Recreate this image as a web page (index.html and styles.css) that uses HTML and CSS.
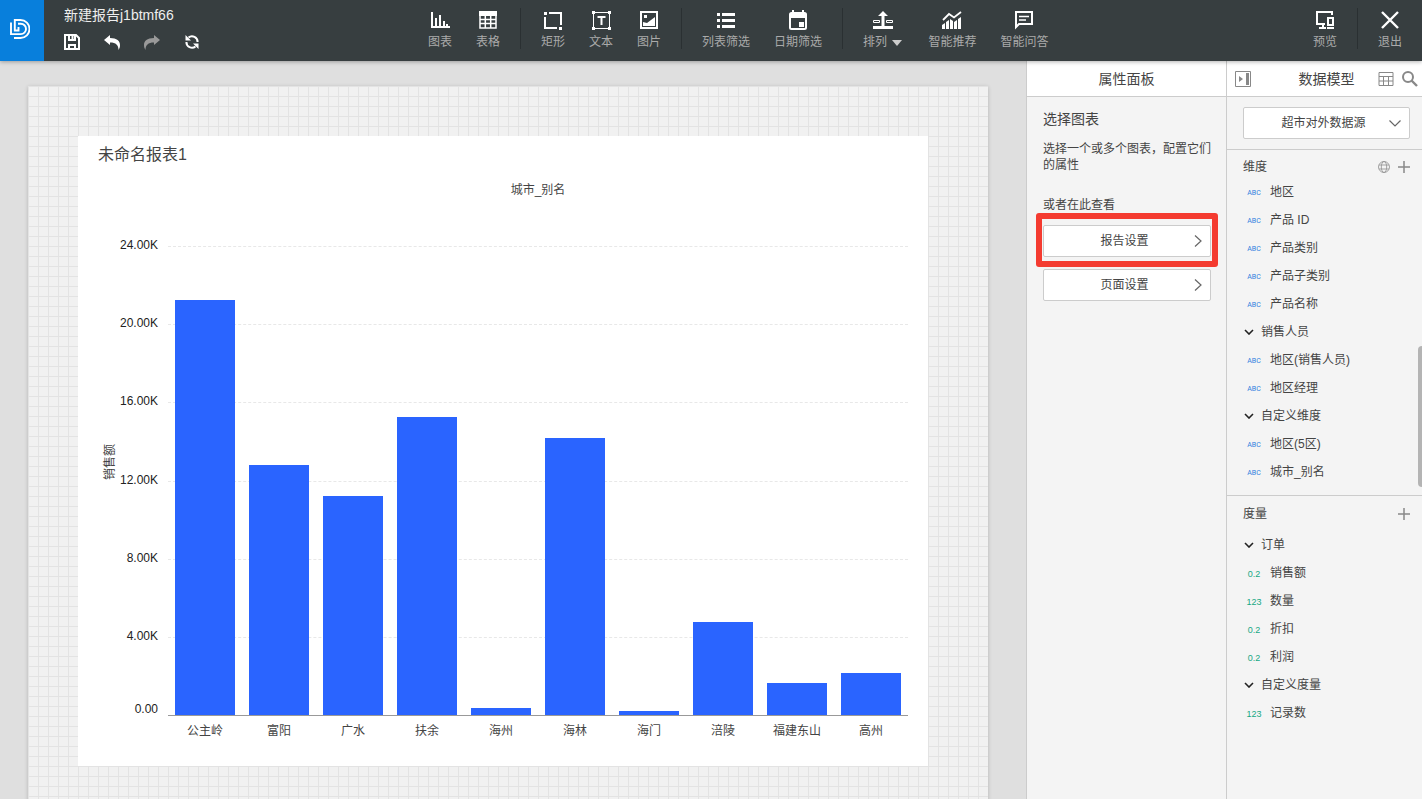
FILE: index.html
```html
<!DOCTYPE html>
<html lang="zh-CN">
<head>
    <meta charset="UTF-8">
    <meta name="viewport" content="width=device-width, initial-scale=1.0">
    <title>新建报告j1btmf66</title>
    <link rel="stylesheet" href="styles.css">
</head>
<body>

<header class="topbar">
    <a class="logo" href="#" aria-label="首页">
        <svg width="20" height="20" viewBox="0 0 20 20" fill="none" stroke="#fff" stroke-width="1.9">
            <path d="M1 3.500v11.600h9.800a5.200 5.200 0 0 0 0-10.400H8"/>
            <path d="M4.800 0v11.500h3.700V8"/>
            <path d="M4 1h6.500a9 9 0 0 1 0 18H4"/>
        </svg>
    </a>
    <div class="report">
        <h1>新建报告j1btmf66</h1>
        <div class="history">
            <button aria-label="保存">
                <svg width="16" height="16" viewBox="0 0 16 16" fill="none" stroke="#fff" stroke-width="2"><path d="M1 1h11l3 3v11H1z"/><path d="M5 1v5h6V1M5 15v-4h6v4M8.500 2v3"/></svg>
            </button>
            <button aria-label="撤销">
                <svg width="16" height="16" viewBox="0 0 16 16" fill="#fff"><path d="M0 6l6-5v3c7 0 10 3 10 7 0 2-.5 3.500-1.500 5C14.500 11 12 8.500 6 8.500V11z"/></svg>
            </button>
            <button aria-label="重做" disabled>
                <svg width="16" height="16" viewBox="0 0 16 16" fill="#999"><path d="M16 6l-6-5v3C3 4 0 7 0 11c0 2 .5 3.500 1.500 5C1.500 11 4 8.500 10 8.500V11z"/></svg>
            </button>
            <button aria-label="刷新">
                <svg width="16" height="16" viewBox="0 0 16 16" fill="none" stroke="#fff" stroke-width="2"><path d="M4.500 3.500A5.600 5.600 0 0 1 13.600 8M11.500 12.500A5.600 5.600 0 0 1 2.400 8"/><path d="M1.500 1v5.500H7zM14.500 15V9.500H9z" fill="#fff" stroke="none"/></svg>
            </button>
        </div>
    </div>

    <nav class="toolbar">
        <div class="tool-group">
            <button class="tool">
                <svg width="20" height="20" viewBox="0 0 20 20" fill="none" stroke="#fff" stroke-width="2"><path d="M2 2v15h18"/><path d="M6 16V8M10 16V5M14 16v-5M17 16v-2"/></svg>
                <span>图表</span>
            </button>
            <button class="tool">
                <svg width="20" height="20" viewBox="0 0 20 20" fill="none" stroke="#fff" stroke-width="1.500"><path d="M2 2h16v16H2zM2 9.500h16M2 13.500h16M7.300 6v12M12.700 6v12"/><path d="M1 1h18v5H1z" fill="#fff" stroke="none"/></svg>
                <span>表格</span>
            </button>
        </div>
        <div class="tool-group">
            <button class="tool">
                <svg width="20" height="20" viewBox="0 0 20 20" fill="none" stroke="#fff" stroke-width="2"><path d="M6 3h12v12M2 7v11h12"/><path d="M1 2h3v3H1zM16 17h3v3h-3z" fill="#fff" stroke="none"/></svg>
                <span>矩形</span>
            </button>
            <button class="tool">
                <svg width="20" height="20" viewBox="0 0 20 20" fill="none" stroke="#fff"><path d="M2.500 2.500h16v16h-16z"/><path d="M6.500 7h8M10.500 6v9" stroke-width="2"/><path d="M1 1h3v3H1zM17 1h3v3h-3zM1 17h3v3H1zM17 17h3v3h-3z" fill="#fff" stroke="none"/></svg>
                <span>文本</span>
            </button>
            <button class="tool">
                <svg width="20" height="20" viewBox="0 0 20 20" fill="none" stroke="#fff" stroke-width="2"><path d="M2 2h16v16H2z"/><path d="M4 12l4 1 8-6v9H4zM5 5h3v3H5z" fill="#fff" stroke="none"/></svg>
                <span>图片</span>
            </button>
        </div>
        <div class="tool-group">
            <button class="tool">
                <svg width="20" height="20" viewBox="0 0 20 20" fill="#fff"><path d="M1 3h3v3H1zM6 3h13v3H6zM1 9h3v3H1zM6 9h13v3H6zM1 15h3v3H1zM6 15h13v3H6z"/></svg>
                <span>列表筛选</span>
            </button>
            <button class="tool">
                <svg width="20" height="20" viewBox="0 0 20 20" fill="none" stroke="#fff" stroke-width="2"><rect x="2" y="3" width="16" height="16" rx="1.500"/><path d="M2 3h16v5H2zM11 12h5v5h-5z" fill="#fff" stroke="none"/><path d="M5 0v4M15 0v4"/></svg>
                <span>日期筛选</span>
            </button>
        </div>
        <div class="tool-group">
            <button class="tool tool-menu">
                <svg width="20" height="20" viewBox="0 0 20 20" fill="#fff"><path d="M10 1l5 5h-3.500v10h-3V6H5zM0 16h20v3H0z"/><path d="M.5 10.500h6v2h-6zM13.500 10.500h6v2h-6z" fill="none" stroke="#fff"/></svg>
                <span>排列 <i class="caret"></i></span>
            </button>
            <button class="tool">
                <svg width="20" height="20" viewBox="0 0 20 20" fill="#fff"><path d="M1 10l6-6 5 3.500L19 2" fill="none" stroke="#fff" stroke-width="1.800"/><path d="M0 19v-4l3-2v6zM4 19v-7l3-2v9zM8 19V9l3 2v8zM12 19v-7l3-2v9zM16 19V9l3-2v12z"/></svg>
                <span>智能推荐</span>
            </button>
            <button class="tool">
                <svg width="20" height="20" viewBox="0 0 20 20" fill="none" stroke="#fff" stroke-width="2"><path d="M2 17V2h16v12H5z"/><path d="M5 6.500h10M5 10h7" stroke-width="1.600"/></svg>
                <span>智能问答</span>
            </button>
        </div>
    </nav>

    <nav class="toolbar toolbar-end">
        <div class="tool-group">
            <button class="tool">
                <svg width="20" height="20" viewBox="0 0 20 20" fill="none" stroke="#fff" stroke-width="2"><path d="M17 5V2H2v12h8M8 14v4M4 18h7"/><path d="M13 8h5v7h-5zM12 18h7"/></svg>
                <span>预览</span>
            </button>
        </div>
        <div class="tool-group">
            <button class="tool">
                <svg width="20" height="20" viewBox="0 0 20 20" stroke="#fff" stroke-width="2.400"><path d="M2 2l16 16M18 2L2 18"/></svg>
                <span>退出</span>
            </button>
        </div>
    </nav>
</header>

<div class="workspace">
    <main class="canvas">
        <div class="page">
            <section class="card">
                <h2>未命名报表1</h2>
                <div class="chart-title">城市_别名</div>
                <div class="chart">
                    <div class="y-title"><span>销售额</span></div>
                    <ul class="y-axis">
                        <li>24.00K</li>
                        <li>20.00K</li>
                        <li>16.00K</li>
                        <li>12.00K</li>
                        <li>8.00K</li>
                        <li>4.00K</li>
                        <li>0.00</li>
                    </ul>
                    <div class="plot">
                        <div class="grid-lines"><i></i><i></i><i></i><i></i><i></i><i></i></div>
                        <div class="bars">
                            <div class="bar" style="height: 88.5%"></div>
                            <div class="bar" style="height: 53.3%"></div>
                            <div class="bar" style="height: 46.7%"></div>
                            <div class="bar" style="height: 63.5%"></div>
                            <div class="bar" style="height: 1.5%"></div>
                            <div class="bar" style="height: 59.1%"></div>
                            <div class="bar" style="height: 0.9%"></div>
                            <div class="bar" style="height: 19.8%"></div>
                            <div class="bar" style="height: 6.8%"></div>
                            <div class="bar" style="height: 9%"></div>
                        </div>
                    </div>
                </div>
                <ul class="x-axis">
                    <li>公主岭</li>
                    <li>富阳</li>
                    <li>广水</li>
                    <li>扶余</li>
                    <li>海州</li>
                    <li>海林</li>
                    <li>海门</li>
                    <li>涪陵</li>
                    <li>福建东山</li>
                    <li>高州</li>
                </ul>
            </section>
        </div>
    </main>

    <aside class="panel props">
        <div class="panel-head"><h2>属性面板</h2></div>
        <div class="props-body">
            <h3>选择图表</h3>
            <p>选择一个或多个图表，配置它们的属性</p>
            <p class="hint">或者在此查看</p>
            <button class="link-btn highlight">
                <span>报告设置</span>
                <svg width="8" height="12" viewBox="0 0 8 12" fill="none" stroke="#666" stroke-width="1.200"><path d="M1 .5L7 6l-6 5.500"/></svg>
            </button>
            <button class="link-btn">
                <span>页面设置</span>
                <svg width="8" height="12" viewBox="0 0 8 12" fill="none" stroke="#666" stroke-width="1.200"><path d="M1 .5L7 6l-6 5.500"/></svg>
            </button>
        </div>
    </aside>

    <aside class="panel model">
        <div class="panel-head">
            <button aria-label="收起">
                <svg width="16" height="16" viewBox="0 0 16 16" fill="none" stroke="#888"><path d="M.5.5h15v15H.5z"/><path d="M4 5l4 3-4 3zM11 2h3v12h-3z" fill="#888" stroke="none"/></svg>
            </button>
            <h2>数据模型</h2>
            <button aria-label="表格视图">
                <svg width="16" height="16" viewBox="0 0 16 16" fill="none" stroke="#888"><path d="M1 1.500h14v13H1zM1 5.500h14M1 10h14M5.500 5.500v9M10.500 5.500v9"/></svg>
            </button>
            <button aria-label="搜索">
                <svg width="16" height="16" viewBox="0 0 16 16" fill="none" stroke="#888" stroke-width="2"><circle cx="6" cy="6" r="5"/><path d="M9.500 9.500L15 15" stroke-width="2.400"/></svg>
            </button>
        </div>
        <div class="source">
            <select aria-label="数据源">
                <option>超市对外数据源</option>
            </select>
            <svg width="12" height="7" viewBox="0 0 12 7" fill="none" stroke="#666" stroke-width="1.200"><path d="M.5.5L6 6 11.500.5"/></svg>
        </div>
        <section class="fields dimensions">
            <div class="fields-head">
                <h3>维度</h3>
                <button aria-label="地理">
                    <svg width="12" height="12" viewBox="0 0 12 12" fill="none" stroke="#999" stroke-width=".9"><circle cx="6" cy="6" r="5.500"/><ellipse cx="6" cy="6" rx="2.700" ry="5.500"/><path d="M1 4h10M1 8h10"/></svg>
                </button>
                <button aria-label="添加维度">
                    <svg width="12" height="12" viewBox="0 0 12 12" stroke="#888" stroke-width="1.500"><path d="M0 6h12M6 0v12"/></svg>
                </button>
            </div>
            <ul>
                <li class="field"><span class="type abc">ABC</span>地区</li>
                <li class="field"><span class="type abc">ABC</span>产品 ID</li>
                <li class="field"><span class="type abc">ABC</span>产品类别</li>
                <li class="field"><span class="type abc">ABC</span>产品子类别</li>
                <li class="field"><span class="type abc">ABC</span>产品名称</li>
                <li><button class="folder"><svg width="10" height="6" viewBox="0 0 10 6" fill="none" stroke="#222" stroke-width="1.600"><path d="M1 1l4 4 4-4"/></svg>销售人员</button></li>
                <li class="field"><span class="type abc">ABC</span>地区(销售人员)</li>
                <li class="field"><span class="type abc">ABC</span>地区经理</li>
                <li><button class="folder"><svg width="10" height="6" viewBox="0 0 10 6" fill="none" stroke="#222" stroke-width="1.600"><path d="M1 1l4 4 4-4"/></svg>自定义维度</button></li>
                <li class="field"><span class="type abc">ABC</span>地区(5区)</li>
                <li class="field"><span class="type abc">ABC</span>城市_别名</li>
            </ul>
            <div class="scroll-thumb"></div>
        </section>
        <section class="fields measures">
            <div class="fields-head">
                <h3>度量</h3>
                <button aria-label="添加度量">
                    <svg width="12" height="12" viewBox="0 0 12 12" stroke="#888" stroke-width="1.500"><path d="M0 6h12M6 0v12"/></svg>
                </button>
            </div>
            <ul>
                <li><button class="folder"><svg width="10" height="6" viewBox="0 0 10 6" fill="none" stroke="#222" stroke-width="1.600"><path d="M1 1l4 4 4-4"/></svg>订单</button></li>
                <li class="field"><span class="type num">0.2</span>销售额</li>
                <li class="field"><span class="type num">123</span>数量</li>
                <li class="field"><span class="type num">0.2</span>折扣</li>
                <li class="field"><span class="type num">0.2</span>利润</li>
                <li><button class="folder"><svg width="10" height="6" viewBox="0 0 10 6" fill="none" stroke="#222" stroke-width="1.600"><path d="M1 1l4 4 4-4"/></svg>自定义度量</button></li>
                <li class="field"><span class="type num">123</span>记录数</li>
            </ul>
        </section>
    </aside>
</div>

</body>
</html>
```

FILE: styles.css
```css
* {
    box-sizing: border-box;
}
body {
    display: flex;
    flex-direction: column;
    height: 100vh;
    margin: 0;
    overflow: hidden;
    font-family: "Liberation Sans", "Noto Sans CJK SC", sans-serif;
    font-size: 12px;
    color: #444;
}
h1, h2, h3, p, ul {
    margin: 0;
    padding: 0;
    font-weight: normal;
    list-style: none;
}
button, select {
    margin: 0;
    padding: 0;
    border: none;
    background: none;
    font: inherit;
    color: inherit;
    cursor: pointer;
}
svg {
    display: block;
    flex: none;
}

/* top bar */
.topbar {
    display: flex;
    flex: none;
    height: 61px;
    background-color: #373e40;
    color: #fff;
    box-shadow: 0 1px 4px rgba(0, 0, 0, 0.3);
    z-index: 1;
}
.logo {
    display: flex;
    align-items: center;
    width: 44px;
    padding: 0 0 4px 10px;
    background-color: #087fdc;
}
.report {
    width: 364px;
    padding: 5px 0 0 20px;
}
.report h1 {
    font-size: 14px;
    line-height: 20px;
    color: #eee;
}
.history {
    display: flex;
    gap: 24px;
    margin-top: 9px;
}
.toolbar {
    display: flex;
    padding: 8px 0 12px;
}
.toolbar-end {
    margin-left: auto;
}
.tool-group {
    display: flex;
    gap: 24px;
    padding: 0 20px;
}
.tool-group + .tool-group {
    border-left: 1px solid #2a3032;
}
.tool {
    display: flex;
    flex-direction: column;
    align-items: center;
    gap: 3px;
    padding-top: 2px;
    line-height: 18px;
    color: #aaa;
    white-space: nowrap;
}
.tool-menu {
    padding-right: 2px;
}
.caret {
    display: inline-block;
    margin-left: 2px;
    border: 5px solid transparent;
    border-top: 6px solid #ccc;
    border-bottom: none;
}

/* workspace */
.workspace {
    display: flex;
    flex: 1;
    min-height: 0;
}
.canvas {
    flex: 1;
    min-width: 0;
    padding: 25px 38px 0 28px;
    overflow: hidden;
    background-color: #dfdfdf;
}
.page {
    min-height: 100%;
    padding: 50px 60px 50px 50px;
    background-color: #f1f1f1;
    background-image:
        linear-gradient(#e3e3e3 1px, transparent 1px),
        linear-gradient(90deg, #e3e3e3 1px, transparent 1px);
    background-size: 10px 10px;
    box-shadow: 0 1px 4px rgba(0, 0, 0, 0.2);
}
.card {
    padding: 0 20px 20px;
    background-color: #fff;
}
.card h2 {
    padding-top: 1px;
    font-size: 16px;
    line-height: 36px;
}

/* chart */
.chart-title {
    margin-left: 70px;
    line-height: 35px;
    text-align: center;
}
.chart {
    display: flex;
    height: 508px;
}
.y-title {
    display: flex;
    align-items: center;
    justify-content: center;
    width: 20px;
}
.y-title span {
    writing-mode: vertical-rl;
    text-orientation: sideways;
    transform: rotate(180deg);
}
.y-axis {
    display: flex;
    flex-direction: column;
    width: 50px;
    padding: 28px 10px 0 0;
    line-height: 18px;
    text-align: right;
    color: #222;
}
.y-axis li {
    flex: 1;
}
.y-axis li:last-child {
    flex: none;
    height: 11px;
    line-height: 8px;
}
.plot {
    display: grid;
    flex: 1;
    margin-top: 38px;
    border-bottom: 1px solid #999;
}
.grid-lines, .bars {
    grid-area: 1 / 1;
    display: flex;
}
.grid-lines {
    flex-direction: column;
}
.grid-lines i {
    flex: 1;
    border-top: 1px dashed #e8e8e8;
}
.bars {
    align-items: flex-end;
    justify-content: space-around;
}
.bar {
    width: 8%;
    background-color: #2a64ff;
}
.x-axis {
    display: flex;
    margin-left: 70px;
    line-height: 30px;
    text-align: center;
}
.x-axis li {
    flex: 1;
}

/* side panels */
.panel {
    flex: none;
    border-left: 1px solid #ccc;
    background-color: #f4f4f4;
    color: #444;
}
.panel-head {
    display: flex;
    align-items: center;
    height: 36px;
    border-bottom: 1px solid #ccc;
    background-color: #fff;
}
.panel-head h2 {
    flex: 1;
    font-size: 14px;
    line-height: 18px;
    text-align: center;
}
.props {
    width: 200px;
}
.props-body {
    padding: 12px 15px 0 16px;
}
.props h3 {
    font-size: 14px;
    line-height: 20px;
}
.props p {
    margin-top: 12px;
    line-height: 16px;
}
.props .hint {
    margin: 24px 0 12px;
}
.link-btn {
    position: relative;
    display: flex;
    align-items: center;
    width: 100%;
    height: 32px;
    margin-bottom: 12px;
    padding: 0 8px;
    border: 1px solid #ccc;
    border-radius: 2px;
    background-color: #fff;
    line-height: 16px;
}
.link-btn span {
    flex: 1;
    padding-left: 3px;
}
.highlight::after {
    content: "";
    position: absolute;
    inset: -13px -8px -11px;
    border: 6px solid #f43b30;
    border-radius: 3px;
}
.model {
    width: 196px;
}
.model .panel-head {
    gap: 8px;
    padding: 0 4px 0 8px;
}
.model .panel-head h2 {
    padding-left: 24px;
}
.source {
    position: relative;
    padding: 10px 12px 10px 16px;
    border-bottom: 1px solid #ccc;
}
.source select {
    display: block;
    width: 100%;
    height: 32px;
    padding-right: 6px;
    border: 1px solid #ccc;
    border-radius: 2px;
    background-color: #fff;
    text-align-last: center;
    appearance: none;
}
.source svg {
    position: absolute;
    top: 23px;
    right: 21px;
    pointer-events: none;
}
.fields {
    line-height: 16px;
}
.fields-head {
    display: flex;
    align-items: center;
    gap: 8px;
    height: 35px;
    padding: 0 12px 0 16px;
}
.fields-head h3 {
    flex: 1;
    font-size: 12px;
}
.dimensions {
    position: relative;
    padding-bottom: 9px;
    border-bottom: 1px solid #ccc;
}
.dimensions .fields-head {
    height: 28px;
    padding-top: 6px;
}
.field {
    display: flex;
    align-items: center;
    height: 28px;
    padding-left: 18px;
}
.type {
    width: 18px;
    margin-right: 7px;
    padding-top: 1px;
    font-size: 9px;
    text-align: center;
}
.abc {
    font-family: Roboto, "Liberation Sans", sans-serif;
    font-size: 7px;
    color: #2f80e0;
}
.num {
    color: #16a884;
}
.folder {
    display: flex;
    align-items: center;
    gap: 7px;
    width: 100%;
    height: 28px;
    padding-left: 17px;
}
.scroll-thumb {
    position: absolute;
    top: 196px;
    right: 0;
    width: 4px;
    height: 141px;
    border-radius: 4px 0 0 4px;
    background-color: #b4b4b4;
}
```
